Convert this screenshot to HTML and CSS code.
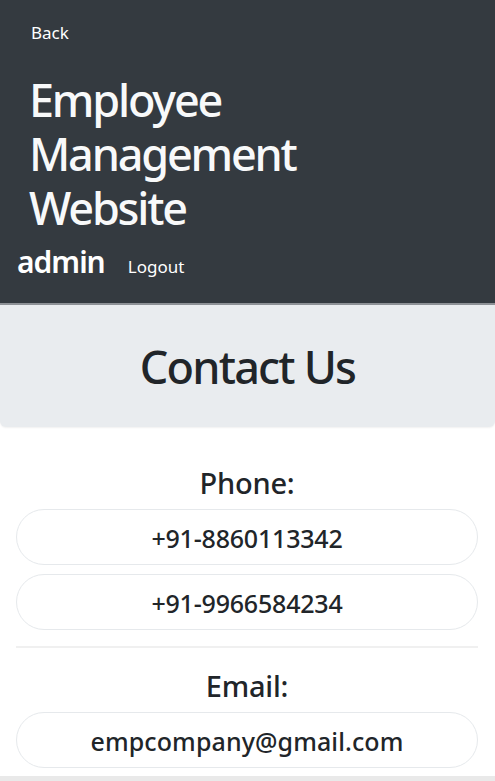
FILE: index.html
```html
<!DOCTYPE html>
<html lang="en">
<head>
<meta charset="utf-8">
<title>Contact Us</title>
<link rel="stylesheet" href="styles.css">
</head>
<body>
<header class="topbar">
  <a class="back" href="#">Back</a>
  <h1 class="brand">Employee Management Website</h1>
  <div class="user">
    <span class="user-name">admin</span>
    <a class="logout" href="#">Logout</a>
  </div>
</header>
<section class="hero">
  <h2 class="hero-title">Contact Us</h2>
</section>
<main class="contact">
  <h3 class="contact-label">Phone:</h3>
  <ul class="pills">
    <li class="pill">+91-8860113342</li>
    <li class="pill">+91-9966584234</li>
  </ul>
  <hr class="divider">
  <h3 class="contact-label">Email:</h3>
  <ul class="pills">
    <li class="pill pill-email">empcompany@gmail.com</li>
  </ul>
</main>
<footer class="foot"></footer>
</body>
</html>
```

FILE: styles.css
```css
* { box-sizing: border-box; }
html, body { margin: 0; padding: 0; }
body {
  font-family: "Noto Sans", "Open Sans", "Liberation Sans", sans-serif;
  color: #212529;
  background: #ffffff;
  width: 495px;
  overflow: hidden;
}
.topbar {
  background: #343a40;
  color: #f8f9fa;
  padding: 21px 0 23px;
  border-bottom: 2px solid #8d9196;
}
.back {
  display: block;
  margin-left: 31px;
  font-size: 17px;
  line-height: 24px;
  color: #ffffff;
  text-decoration: none;
}
.brand {
  margin: 28px 0 0 29px;
  max-width: 420px;
  font-size: 45px;
  line-height: 54px;
  font-weight: 500;
  letter-spacing: -2.2px;
  color: #f8f9fa;
}
.user {
  display: flex;
  align-items: baseline;
  gap: 23px;
  margin: 9px 0 0 17px;
}
.user-name {
  font-size: 30px;
  line-height: 36px;
  font-weight: 600;
  letter-spacing: -1px;
  color: #ffffff;
}
.logout {
  font-size: 17px;
  line-height: 24px;
  color: #ffffff;
  text-decoration: none;
}
.hero {
  background: #e9ecef;
  border-radius: 0 0 6px 6px;
  padding: 35px 0 33px;
  box-shadow: 0 1px 2px rgba(0,0,0,0.06);
}
.hero-title {
  margin: 0;
  text-align: center;
  font-size: 45px;
  line-height: 54px;
  font-weight: 500;
  letter-spacing: -1.8px;
  color: #212529;
}
.contact {
  padding: 38px 17px 0 16px;
}
.contact-label {
  margin: 0;
  text-align: center;
  font-size: 29px;
  line-height: 35px;
  font-weight: 500;
  letter-spacing: -0.2px;
  color: #212529;
}
.pills {
  list-style: none;
  margin: 9px 0 0;
  padding: 0;
  display: flex;
  flex-direction: column;
  gap: 9px;
}
.pill {
  border: 1px solid #e6e9ec;
  border-radius: 28px;
  padding: 13px 0 11px;
  text-align: center;
  font-size: 25px;
  line-height: 30px;
  font-weight: 500;
  letter-spacing: -0.2px;
  color: #212529;
}
.pill-email {
  letter-spacing: 0.1px;
}
.divider {
  margin: 16px 0 20px;
  border: 0;
  border-top: 2px solid #f0f0f0;
  height: 0;
}
.foot {
  margin-top: 8px;
  height: 20px;
  background: #e9e9e9;
}
```
